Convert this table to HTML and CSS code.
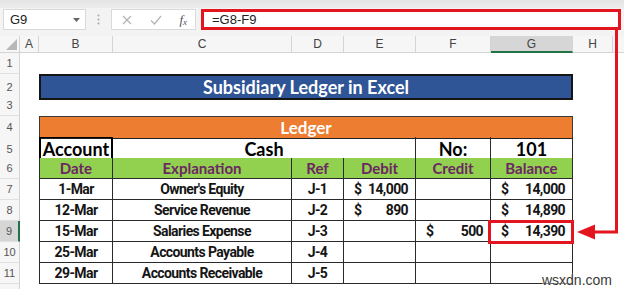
FILE: index.html
```html
<!DOCTYPE html>
<html>
<head>
<meta charset="utf-8">
<link rel="stylesheet" href="styles.css">
</head>
<body>
<div class="app">
  <div class="toolbar">
    <div class="namebox"><span>G9</span><svg class="caret" width="7" height="4" viewBox="0 0 7 4"><path d="M0 0H7L3.5 4Z" fill="#666"/></svg></div>
    <div class="dots"><svg width="3" height="11" viewBox="0 0 3 11"><circle cx="1.5" cy="1.5" r="1" fill="#a6a6a6"/><circle cx="1.5" cy="5.5" r="1" fill="#a6a6a6"/><circle cx="1.5" cy="9.5" r="1" fill="#a6a6a6"/></svg></div>
    <div class="fxbox">
      <svg width="10" height="10" viewBox="0 0 10 10"><path d="M1 1L9 9M9 1L1 9" stroke="#b3b3b3" stroke-width="1.2"/></svg>
      <svg width="12" height="10" viewBox="0 0 12 10"><path d="M1 5.5L4.5 9L11 1" stroke="#b3b3b3" stroke-width="1.2" fill="none"/></svg>
      <span class="fx">f<sub>x</sub></span>
    </div>
    <div class="formula">=G8-F9</div>
  </div>

  <div class="sheet">
    <div class="row hdr">
      <div class="corner"><svg width="11" height="11" viewBox="0 0 11 11"><path d="M11 0V11H0Z" fill="#b8b8b8"/></svg></div>
      <div class="ch">A</div><div class="ch">B</div><div class="ch">C</div><div class="ch">D</div><div class="ch">E</div><div class="ch">F</div><div class="ch sel">G</div><div class="ch">H</div><div class="ch last"></div>
    </div>
    <div class="row"><div class="rh">1</div></div>
    <div class="row"><div class="rh">2</div><div class="title">Subsidiary Ledger in Excel</div></div>
    <div class="row"><div class="rh">3</div></div>
    <div class="row"><div class="rh">4</div><div class="ledger">Ledger</div></div>
    <div class="row r5">
      <div class="rh">5</div>
      <div class="cell big first acct">Account</div>
      <div class="cell big span3">Cash</div>
      <div class="cell big">No:</div>
      <div class="cell big">101</div>
    </div>
    <div class="row green">
      <div class="rh">6</div>
      <div class="cell first">Date</div>
      <div class="cell">Explanation</div>
      <div class="cell">Ref</div>
      <div class="cell">Debit</div>
      <div class="cell">Credit</div>
      <div class="cell">Balance</div>
    </div>
    <div class="row data">
      <div class="rh">7</div>
      <div class="cell first">1-Mar</div>
      <div class="cell">Owner's Equity</div>
      <div class="cell">J-1</div>
      <div class="cell money"><span>$</span><span>14,000</span></div>
      <div class="cell"></div>
      <div class="cell money"><span>$</span><span>14,000</span></div>
    </div>
    <div class="row data">
      <div class="rh">8</div>
      <div class="cell first">12-Mar</div>
      <div class="cell">Service Revenue</div>
      <div class="cell">J-2</div>
      <div class="cell money"><span>$</span><span>890</span></div>
      <div class="cell"></div>
      <div class="cell money"><span>$</span><span>14,890</span></div>
    </div>
    <div class="row data">
      <div class="rh sel">9</div>
      <div class="cell first">15-Mar</div>
      <div class="cell">Salaries Expense</div>
      <div class="cell">J-3</div>
      <div class="cell"></div>
      <div class="cell money"><span>$</span><span>500</span></div>
      <div class="cell money hl"><span>$</span><span>14,390</span></div>
    </div>
    <div class="row data">
      <div class="rh">10</div>
      <div class="cell first">25-Mar</div>
      <div class="cell">Accounts Payable</div>
      <div class="cell">J-4</div>
      <div class="cell"></div>
      <div class="cell"></div>
      <div class="cell"></div>
    </div>
    <div class="row data">
      <div class="rh">11</div>
      <div class="cell first">29-Mar</div>
      <div class="cell">Accounts Receivable</div>
      <div class="cell">J-5</div>
      <div class="cell"></div>
      <div class="cell"></div>
      <div class="cell"></div>
    </div>
    <div class="row"><div class="rh"></div></div>
  </div>

  <svg class="arrow" width="624" height="289" viewBox="0 0 624 289">
    <path d="M616.5 30V232H592" stroke="#e3151e" stroke-width="3" fill="none"/>
    <path d="M577 232L595 224.5V239.5Z" fill="#e3151e"/>
  </svg>
  <div class="wm">wsxdn.com</div>
</div>
</body>
</html>
```

FILE: styles.css
```css
* { box-sizing: border-box; }
html, body { margin: 0; padding: 0; background: #fff; }
body { width: 624px; height: 289px; overflow: hidden; }
.app { position: relative; width: 624px; height: 289px; overflow: hidden; font-family: "Liberation Sans", Arial, sans-serif; }

.toolbar {
  height: 36px;
  padding-top: 9px;
  display: flex;
  align-items: flex-start;
  background: linear-gradient(#e4e4e4 0, #ececec 8px, #f3f3f3 8px);
}
.namebox {
  margin-left: 3px;
  width: 83px;
  height: 21px;
  background: #fff;
  border: 1px solid #dadada;
  display: flex;
  align-items: center;
  justify-content: space-between;
  padding: 0 5px 0 6px;
  font-size: 13px;
  color: #222;
}
.dots { width: 25px; height: 21px; display: flex; align-items: center; justify-content: center; }
.fxbox {
  width: 85px;
  height: 21px;
  background: #fff;
  border: 1px solid #dadada;
  display: flex;
  align-items: center;
  justify-content: space-between;
  padding: 0 8px 0 10px;
}
.fx { font-family: "Liberation Serif", serif; font-style: italic; font-size: 13px; color: #555; }
.fx sub { font-size: 9px; vertical-align: -1px; }
.formula {
  margin-left: 5px;
  width: 420px;
  height: 21px;
  background: #fff;
  border: 3px solid #e3151e;
  display: flex;
  align-items: center;
  padding-left: 8px;
  font-size: 13px;
  color: #222;
}

.row {
  display: grid;
  grid-template-columns: 20px 19px 74px 179px 52px 72px 75px 82px 40px 1fr;
  height: 21px;
}
.row.hdr { height: 17px; }
.corner {
  background: #f6f6f6;
  border-right: 1px solid #d4d4d4;
  border-bottom: 1px solid #d4d4d4;
  display: flex;
  align-items: flex-end;
  justify-content: flex-end;
  padding: 0 2px 2px 0;
}
.ch {
  background: #f6f6f6;
  border-right: 1px solid #d4d4d4;
  border-bottom: 1px solid #d4d4d4;
  font-size: 12px;
  color: #444;
  display: flex;
  align-items: center;
  justify-content: center;
}
.ch.last { border-right: none; }
.ch.sel { background: #d6d6d6; border-bottom: 2px solid #217346; }
.rh {
  background: #f6f6f6;
  border-right: 1px solid #d4d4d4;
  border-bottom: 1px solid #e0e0e0;
  font-size: 11px;
  color: #555;
  display: flex;
  align-items: center;
  justify-content: center;
}
.rh.sel { background: #d6d6d6; border-right: 2px solid #217346; }

.title {
  grid-column: 3 / 9;
  background: #2f5597;
  border: 2px solid #151515;
  color: #fff;
  font-family: Lato, "Liberation Sans", sans-serif;
  font-weight: 700;
  font-size: 18px;
  display: flex;
  align-items: center;
  justify-content: center;
}
.ledger {
  grid-column: 3 / 9;
  background: #ed7d31;
  border: 1px solid #3a3a3a;
  border-bottom-color: #222;
  color: #fff;
  font-family: Lato, "Liberation Sans", sans-serif;
  font-weight: 700;
  font-size: 17px;
  display: flex;
  align-items: center;
  justify-content: center;
}

.cell {
  border-right: 1px solid #2a2a2a;
  border-bottom: 1px solid #2a2a2a;
  display: flex;
  align-items: center;
  justify-content: center;
  font-family: Lato, "Liberation Sans", sans-serif;
  font-weight: 700;
  font-size: 15px;
  color: #111;
  white-space: nowrap;
}
.cell.first { grid-column-start: 3; border-left: 1px solid #2a2a2a; }
.cell.span3 { grid-column: span 3; }
.cell.big { font-size: 18px; color: #000; }
.cell.acct { border: 2px solid #000; border-top-width: 1px; }

.green .cell { background: #92d050; color: #6b2762; }

.data .cell {
  font-family: Roboto, "Liberation Sans", sans-serif;
  font-weight: 700;
  font-size: 14px;
  letter-spacing: -0.6px;
  color: #151515;
}
.cell.money { justify-content: space-between; padding: 0 7px 0 10px; }
.hl { position: relative; }
.hl::after {
  content: "";
  position: absolute;
  left: -3px;
  top: -1px;
  right: -2px;
  bottom: -3px;
  border: 3px solid #e3151e;
}

.arrow { position: absolute; left: 0; top: 0; pointer-events: none; }
.wm {
  position: absolute;
  right: 12px;
  bottom: 1px;
  font-size: 14px;
  color: #3a3a3a;
  text-shadow: 0 0 2px #fff, 0 0 2px #fff;
}
```
